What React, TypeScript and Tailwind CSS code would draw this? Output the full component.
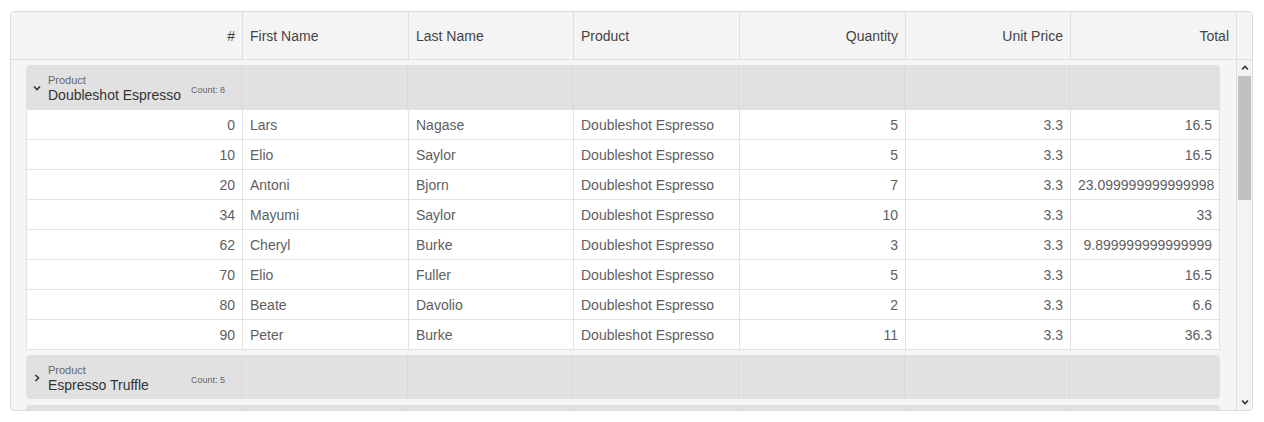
const rows = [
  { id: 0, first: "Lars", last: "Nagase", qty: 5, total: "16.5" },
  { id: 10, first: "Elio", last: "Saylor", qty: 5, total: "16.5" },
  { id: 20, first: "Antoni", last: "Bjorn", qty: 7, total: "23.099999999999998" },
  { id: 34, first: "Mayumi", last: "Saylor", qty: 10, total: "33" },
  { id: 62, first: "Cheryl", last: "Burke", qty: 3, total: "9.899999999999999" },
  { id: 70, first: "Elio", last: "Fuller", qty: 5, total: "16.5" },
  { id: 80, first: "Beate", last: "Davolio", qty: 2, total: "6.6" },
  { id: 90, first: "Peter", last: "Burke", qty: 11, total: "36.3" },
];

function Chevron({ dir }: { dir: "down" | "right" | "up" }) {
  const d =
    dir === "down" ? "M1 2.5 L4 5.5 L7 2.5" : dir === "up" ? "M1 5.5 L4 2.5 L7 5.5" : "M2.5 1 L5.5 4 L2.5 7";
  return (
    <svg width="8" height="8" viewBox="0 0 8 8" className="shrink-0">
      <path d={d} fill="none" stroke="#333" strokeWidth="1.6" />
    </svg>
  );
}

function GroupCells() {
  return (
    <>
      <div className="w-[166px] shrink-0 border-r border-[#d9d9d9]" />
      <div className="w-[165px] shrink-0 border-r border-[#d9d9d9]" />
      <div className="w-[166px] shrink-0 border-r border-[#d9d9d9]" />
      <div className="w-[166px] shrink-0 border-r border-[#d9d9d9]" />
      <div className="w-[165px] shrink-0 border-r border-[#d9d9d9]" />
      <div className="flex-1" />
    </>
  );
}

function GroupHeader({ name, count, open }: { name: string; count: number; open: boolean }) {
  return (
    <div
      className={`flex h-[44px] w-[1194px] bg-[#e1e1e1] ${open ? "rounded-t-[4px]" : "rounded-[4px]"}`}
    >
      <div className="flex w-[216px] shrink-0 items-center border-r border-[#d9d9d9] pl-[7px] pr-[16px]">
        <div className="mt-[2px]">
          <Chevron dir={open ? "down" : "right"} />
        </div>
        <div className="ml-[7px] mt-[2px] flex flex-col leading-none">
          <span className="text-[11px] text-[#666]">Product</span>
          <span className="mt-[2px] text-[14px] text-[#333]">{name}</span>
        </div>
        <span className="ml-auto mt-[7px] text-[9px] text-[#666]">Count: {count}</span>
      </div>
      <GroupCells />
    </div>
  );
}

export default function App() {
  const head = "flex shrink-0 items-center border-r border-[#dedede] px-[7px] pt-[2px]";
  const cell = "flex shrink-0 items-center border-r border-[#e2e2e2] px-[7px] pt-[1px]";
  return (
    <div className="pl-[10px] pt-[11px] font-['Liberation_Sans',Arial,sans-serif] text-[14px]">
      <div className="flex h-[400px] w-[1243px] flex-col overflow-hidden rounded-[4px] border border-[#dcdcdc] bg-[#f5f5f5]">
        <div className="flex h-[48px] shrink-0 border-b border-[#dedede] bg-[#f4f4f4] text-[#444]">
          <div className={`${head} w-[232px] justify-end`}>#</div>
          <div className={`${head} w-[166px]`}>First Name</div>
          <div className={`${head} w-[165px]`}>Last Name</div>
          <div className={`${head} w-[166px]`}>Product</div>
          <div className={`${head} w-[166px] justify-end`}>Quantity</div>
          <div className={`${head} w-[165px] justify-end`}>Unit Price</div>
          <div className={`${head} w-[166px] justify-end`}>Total</div>
          <div className="flex-1" />
        </div>
        <div className="flex min-h-0 flex-1">
          <div className="w-[1225px] shrink-0 overflow-hidden pl-[15px] pt-[5px]">
            <GroupHeader name="Doubleshot Espresso" count={8} open />
            <div className="w-[1194px] border-x border-b border-[#e2e2e2] bg-white text-[#5e5e5e]">
              {rows.map((r) => (
                <div key={r.id} className="flex h-[30px] border-t border-[#e2e2e2]">
                  <div className={`${cell} w-[216px] justify-end`}>{r.id}</div>
                  <div className={`${cell} w-[166px]`}>{r.first}</div>
                  <div className={`${cell} w-[165px]`}>{r.last}</div>
                  <div className={`${cell} w-[166px]`}>Doubleshot Espresso</div>
                  <div className={`${cell} w-[166px] justify-end`}>{r.qty}</div>
                  <div className={`${cell} w-[165px] justify-end`}>3.3</div>
                  <div className="flex flex-1 items-center justify-end px-[7px] pt-[1px]">{r.total}</div>
                </div>
              ))}
            </div>
            <div className="mt-[5px]">
              <GroupHeader name="Espresso Truffle" count={5} open={false} />
            </div>
            <div className="mt-[6px] flex h-[44px] w-[1194px] rounded-[4px] bg-[#e1e1e1]">
              <div className="w-[216px] shrink-0 border-r border-[#d9d9d9]" />
              <GroupCells />
            </div>
          </div>
          <div className="flex flex-1 flex-col items-center border-l border-[#dedede] bg-[#f3f3f3]">
            <div className="mt-[4px] flex h-[8px] items-center">
              <Chevron dir="up" />
            </div>
            <div className="mt-[4px] h-[124px] w-[13px] bg-[#c1c1c1]" />
            <div className="flex-1" />
            <div className="mb-[4px] flex h-[8px] items-center">
              <Chevron dir="down" />
            </div>
          </div>
        </div>
      </div>
    </div>
  );
}
